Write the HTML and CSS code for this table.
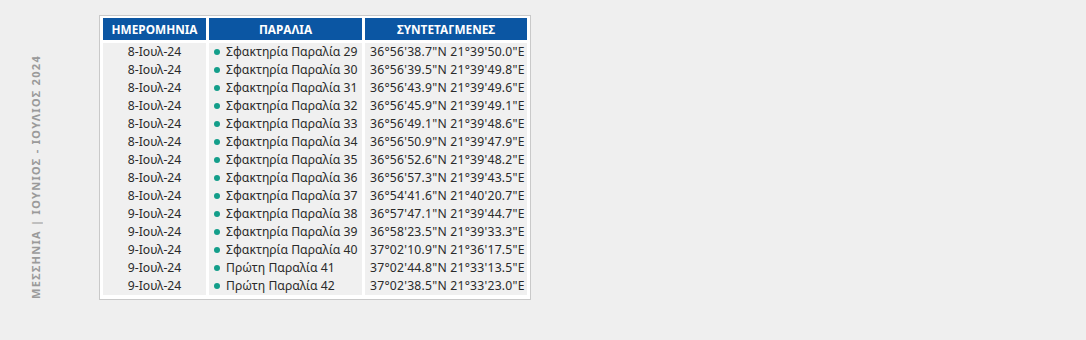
FILE: index.html
```html
<!DOCTYPE html>
<html lang="el">
<head>
<meta charset="utf-8">
<link rel="stylesheet" href="styles.css">
</head>
<body>
<div class="page">
  <div class="side"><span class="side-text">ΜΕΣΣΗΝΙΑ | ΙΟΥΝΙΟΣ - ΙΟΥΛΙΟΣ 2024</span></div>
  <table class="beaches">
    <thead>
      <tr><th>ΗΜΕΡΟΜΗΝΙΑ</th><th>ΠΑΡΑΛΙΑ</th><th>ΣΥΝΤΕΤΑΓΜΕΝΕΣ</th></tr>
    </thead>
    <tbody>
      <tr><td class="date">8-Ιουλ-24</td><td class="name"><span class="dot"></span>Σφακτηρία Παραλία 29</td><td class="coord">36°56'38.7"N 21°39'50.0"E</td></tr>
      <tr><td class="date">8-Ιουλ-24</td><td class="name"><span class="dot"></span>Σφακτηρία Παραλία 30</td><td class="coord">36°56'39.5"N 21°39'49.8"E</td></tr>
      <tr><td class="date">8-Ιουλ-24</td><td class="name"><span class="dot"></span>Σφακτηρία Παραλία 31</td><td class="coord">36°56'43.9"N 21°39'49.6"E</td></tr>
      <tr><td class="date">8-Ιουλ-24</td><td class="name"><span class="dot"></span>Σφακτηρία Παραλία 32</td><td class="coord">36°56'45.9"N 21°39'49.1"E</td></tr>
      <tr><td class="date">8-Ιουλ-24</td><td class="name"><span class="dot"></span>Σφακτηρία Παραλία 33</td><td class="coord">36°56'49.1"N 21°39'48.6"E</td></tr>
      <tr><td class="date">8-Ιουλ-24</td><td class="name"><span class="dot"></span>Σφακτηρία Παραλία 34</td><td class="coord">36°56'50.9"N 21°39'47.9"E</td></tr>
      <tr><td class="date">8-Ιουλ-24</td><td class="name"><span class="dot"></span>Σφακτηρία Παραλία 35</td><td class="coord">36°56'52.6"N 21°39'48.2"E</td></tr>
      <tr><td class="date">8-Ιουλ-24</td><td class="name"><span class="dot"></span>Σφακτηρία Παραλία 36</td><td class="coord">36°56'57.3"N 21°39'43.5"E</td></tr>
      <tr><td class="date">8-Ιουλ-24</td><td class="name"><span class="dot"></span>Σφακτηρία Παραλία 37</td><td class="coord">36°54'41.6"N 21°40'20.7"E</td></tr>
      <tr><td class="date">9-Ιουλ-24</td><td class="name"><span class="dot"></span>Σφακτηρία Παραλία 38</td><td class="coord">36°57'47.1"N 21°39'44.7"E</td></tr>
      <tr><td class="date">9-Ιουλ-24</td><td class="name"><span class="dot"></span>Σφακτηρία Παραλία 39</td><td class="coord">36°58'23.5"N 21°39'33.3"E</td></tr>
      <tr><td class="date">9-Ιουλ-24</td><td class="name"><span class="dot"></span>Σφακτηρία Παραλία 40</td><td class="coord">37°02'10.9"N 21°36'17.5"E</td></tr>
      <tr><td class="date">9-Ιουλ-24</td><td class="name"><span class="dot"></span>Πρώτη Παραλία 41</td><td class="coord">37°02'44.8"N 21°33'13.5"E</td></tr>
      <tr><td class="date">9-Ιουλ-24</td><td class="name"><span class="dot"></span>Πρώτη Παραλία 42</td><td class="coord">37°02'38.5"N 21°33'23.0"E</td></tr>
    </tbody>
  </table>
</div>
</body>
</html>
```
FILE: styles.css
```css
html, body {
  margin: 0;
  padding: 0;
  background: #efefef;
}
body {
  font-family: "Noto Sans", "Open Sans", sans-serif;
  color: #2a2a2a;
}
.page {
  display: flex;
  align-items: flex-start;
  padding: 15px 0 0 28px;
}
.side {
  width: 14px;
  height: 284px;
  display: flex;
  align-items: flex-end;
  justify-content: center;
  margin-right: 57px;
}
.side-text {
  writing-mode: vertical-rl;
  transform: rotate(180deg);
  font-size: 11px;
  font-weight: 700;
  letter-spacing: 1.3px;
  color: #9a9a9a;
  white-space: nowrap;
}
.beaches {
  border: 1px solid #c9c9c9;
  background: #ffffff;
  border-collapse: separate;
  border-spacing: 3px 0;
  padding: 2px 0 4px 0;
}
.beaches th {
  background: #0b56a3;
  color: #ffffff;
  font-size: 11.8px;
  font-weight: 700;
  height: 22px;
  padding: 0;
  border-bottom: 3px solid #ffffff;
  text-align: center;
}
.beaches th:nth-child(1) { width: 103px; }
.beaches th:nth-child(2) { width: 153px; }
.beaches th:nth-child(3) { width: 162px; }
.beaches td {
  background: #f0f0f0;
  font-size: 12.2px;
  height: 18px;
  padding: 0;
  line-height: 18px;
  white-space: nowrap;
}
.beaches td.date {
  text-align: center;
}
.beaches td.name {
  padding-left: 5px;
}
.beaches td.coord {
  padding-left: 5px;
  letter-spacing: 0.22px;
}
.dot {
  display: inline-block;
  width: 6px;
  height: 6px;
  border-radius: 50%;
  background: #139e8a;
  margin-right: 6px;
  vertical-align: 1px;
}
```
